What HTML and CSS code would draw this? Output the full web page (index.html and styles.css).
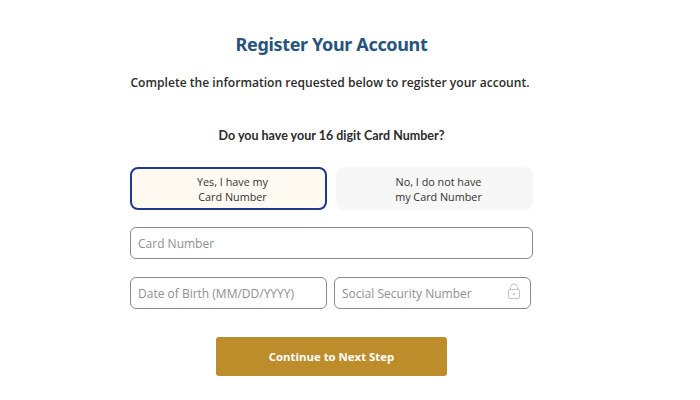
FILE: index.html
```html
<!DOCTYPE html>
<html lang="en">
<head>
    <meta charset="UTF-8">
    <meta name="viewport" content="width=device-width, initial-scale=1.0">
    <title>Register Your Account</title>
    <link rel="stylesheet" href="styles.css">
</head>
<body>

    <div class="container">
        <h1>Register Your Account</h1>
        <p class="intro">Complete the information requested below to register your account.</p>
        <p class="question">Do you have your 16 digit Card Number?</p>

        <div class="choices">
            <button class="choice selected">Yes, I have my<br>Card Number</button>
            <button class="choice">No, I do not have<br>my Card Number</button>
        </div>

        <input class="field card-field" type="text" placeholder="Card Number">

        <div class="field-row">
            <input class="field dob-field" type="text" placeholder="Date of Birth (MM/DD/YYYY)">
            <div class="ssn-wrap">
                <input class="field ssn-field" type="text" placeholder="Social Security Number">
                <svg class="lock" width="14" height="17" viewBox="0 0 14 17" fill="none" stroke="#c4c4c4" stroke-width="1">
                    <rect x="1.5" y="6.5" width="11" height="9" rx="1.5"/>
                    <path d="M3.5 6.5V4.5a3.5 3.5 0 0 1 7 0v2"/>
                    <circle cx="7" cy="11" r="0.8" fill="#c4c4c4"/>
                </svg>
            </div>
        </div>

        <button class="next-btn">Continue to Next Step</button>
    </div>

</body>
</html>
```

FILE: styles.css
```css
body {
    background-color: #ffffff;
    color: #2b2b2b;
    font-family: "Open Sans", sans-serif;
    margin: 0;
}
.container {
    width: 403px;
    margin-left: 130px;
    padding-top: 31px;
    display: flex;
    flex-direction: column;
}
h1 {
    margin: 0;
    color: #26547c;
    font-family: "Noto Sans", sans-serif;
    font-size: 18px;
    line-height: 26px;
    font-weight: 700;
    text-align: center;
    letter-spacing: -0.35px;
}
.intro {
    margin: 16px 0 0;
    padding-right: 3px;
    font-size: 12.1px;
    line-height: 20px;
    font-weight: 600;
    text-align: center;
    white-space: nowrap;
}
.question {
    margin: 33px 0 0;
    font-family: "Lato", sans-serif;
    font-size: 12.5px;
    line-height: 20px;
    font-weight: 700;
    text-align: center;
}
.choices {
    display: flex;
    justify-content: space-between;
    margin-top: 21px;
}
.choice {
    width: 197px;
    height: 43px;
    padding: 0 0 0 8px;
    border: none;
    border-radius: 8px;
    background-color: #f7f7f7;
    color: #333333;
    font-family: "Open Sans", sans-serif;
    font-size: 10.8px;
    line-height: 15px;
}
.choice.selected {
    width: 197px;
    border: 2px solid #1f3a8a;
    background-color: #fffaf1;
}
.field {
    display: block;
    box-sizing: border-box;
    height: 32px;
    padding: 0 7px;
    border: 1px solid #8a8a8a;
    border-radius: 6px;
    background-color: #ffffff;
    font-family: "Open Sans", sans-serif;
    font-size: 12px;
    outline: none;
}
.field::placeholder {
    color: #8f8f8f;
    opacity: 1;
}
.card-field {
    width: 403px;
    margin-top: 17px;
}
.field-row {
    display: flex;
    gap: 7px;
    margin-top: 18px;
}
.dob-field {
    width: 197px;
}
.ssn-wrap {
    position: relative;
    width: 197px;
}
.ssn-field {
    width: 100%;
}
.lock {
    position: absolute;
    top: 6px;
    right: 10px;
}
.next-btn {
    align-self: center;
    width: 231px;
    height: 39px;
    margin-top: 28px;
    border: none;
    border-radius: 3px;
    background-color: #bd8c2b;
    color: #ffffff;
    font-family: "Open Sans", sans-serif;
    font-size: 11.4px;
    font-weight: 700;
}
```
